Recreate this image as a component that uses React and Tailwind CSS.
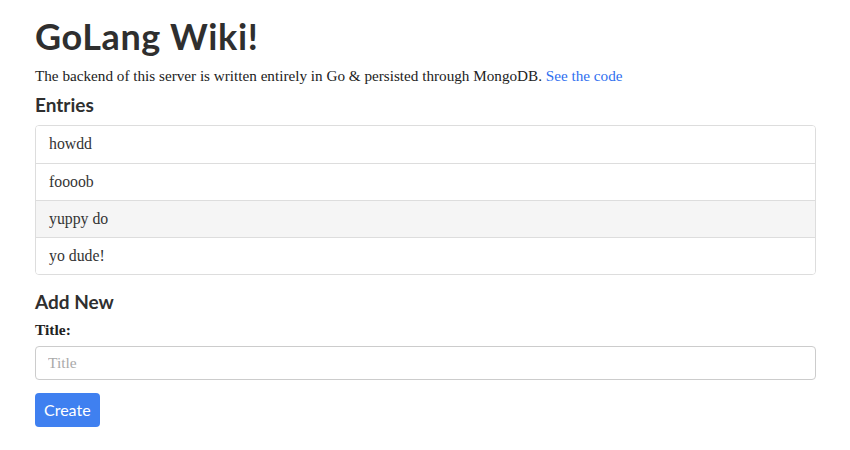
export default function App() {
  const entries = ["howdd", "foooob", "yuppy do", "yo dude!"];
  return (
    <div className="min-h-[450px] w-[850px] bg-white text-[#333] font-['Liberation_Serif',Georgia,serif]">
      <div className="pl-[35px] pr-[34px] pt-[16px]">
        <h1 className="font-['Lato',sans-serif] text-[36px] font-bold leading-[40px] tracking-[0.6px] text-[#2f2f2f]">
          GoLang Wiki!
        </h1>
        <p className="mt-[9px] text-[15.2px] leading-[22px] text-[#222]">
          The backend of this server is written entirely in Go &amp; persisted through MongoDB.{" "}
          <a href="#" className="text-[#2f6ff0]">See the code</a>
        </p>

        <h3 className="mt-[6px] font-['Lato',sans-serif] text-[19px] font-bold leading-[24px] text-[#2f2f2f]">
          Entries
        </h3>
        <ul className="mt-[8px] overflow-hidden rounded-[4px] border border-[#dddddd]">
          {entries.map((e, i) => (
            <li
              key={e}
              className={`h-[37px] border-[#dddddd] px-[13px] text-[15.8px] leading-[36px] text-[#333] ${
                i > 0 ? "border-t" : ""
              } ${i === 2 ? "bg-[#f5f5f5]" : "bg-white"}`}
            >
              {e}
            </li>
          ))}
        </ul>

        <h3 className="mt-[15px] font-['Lato',sans-serif] text-[19px] font-bold leading-[24px] text-[#2f2f2f]">
          Add New
        </h3>
        <label className="mt-[5px] block text-[15.5px] font-bold leading-[22px] text-[#222]">
          Title:
        </label>
        <input
          placeholder="Title"
          className="mt-[5px] block h-[34px] w-full rounded-[4px] border border-[#cccccc] px-[12px] text-[15.5px] placeholder:text-[#aaaaaa] outline-none"
        />
        <button className="mt-[13px] h-[34px] rounded-[4px] bg-[#3f80f0] px-[9px] font-['Lato',sans-serif] text-[16px] text-white">
          Create
        </button>
      </div>
    </div>
  );
}
